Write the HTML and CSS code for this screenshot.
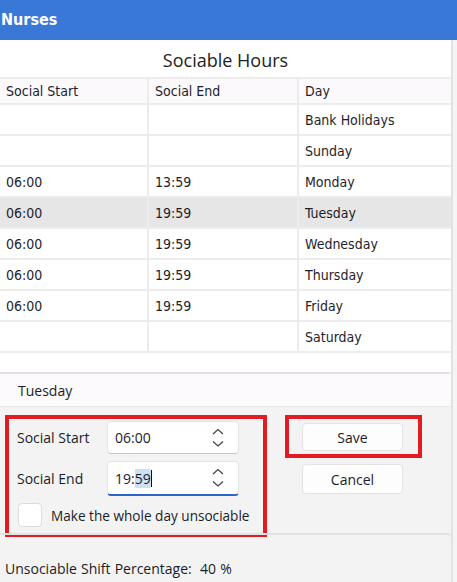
FILE: index.html
```html
<!DOCTYPE html>
<html lang="en">
<head>
    <meta charset="UTF-8">
    <meta name="viewport" content="width=device-width, initial-scale=1.0">
    <title>Nurses</title>
    <link rel="stylesheet" href="styles.css">
</head>
<body>
    <div class="titlebar">Nurses</div>
    <div class="window">
        <div class="content">
            <div class="grid">
                <div class="grid-title">Sociable Hours</div>
                <table class="hours">
                    <thead>
                        <tr><th>Social Start</th><th>Social End</th><th>Day</th></tr>
                    </thead>
                    <tbody>
                        <tr><td></td><td></td><td>Bank Holidays</td></tr>
                        <tr><td></td><td></td><td>Sunday</td></tr>
                        <tr><td>06:00</td><td>13:59</td><td>Monday</td></tr>
                        <tr class="selected"><td>06:00</td><td>19:59</td><td>Tuesday</td></tr>
                        <tr><td>06:00</td><td>19:59</td><td>Wednesday</td></tr>
                        <tr><td>06:00</td><td>19:59</td><td>Thursday</td></tr>
                        <tr><td>06:00</td><td>19:59</td><td>Friday</td></tr>
                        <tr><td></td><td></td><td>Saturday</td></tr>
                    </tbody>
                </table>
            </div>

            <div class="detail">
                <div class="detail-head">Tuesday</div>
                <div class="editor">
                    <div class="fields marked">
                        <div class="field">
                            <label class="field-label">Social Start</label>
                            <div class="time-box">
                                <span class="time-value">06:00</span>
                                <svg class="spin" width="14" height="20" viewBox="0 0 14 20">
                                    <path d="M2 6 L7 1.5 L12 6" />
                                    <path d="M2 13.5 L7 18 L12 13.5" />
                                </svg>
                            </div>
                        </div>
                        <div class="field">
                            <label class="field-label">Social End</label>
                            <div class="time-box focused">
                                <span class="time-value">19:<span class="sel">59</span><span class="caret"></span></span>
                                <svg class="spin" width="14" height="20" viewBox="0 0 14 20">
                                    <path d="M2 6 L7 1.5 L12 6" />
                                    <path d="M2 13.5 L7 18 L12 13.5" />
                                </svg>
                            </div>
                        </div>
                        <div class="check-row">
                            <span class="check"></span>
                            <span>Make the whole day unsociable</span>
                        </div>
                    </div>
                    <div class="actions">
                        <div class="save-wrap marked">
                            <button class="btn">Save</button>
                        </div>
                        <button class="btn cancel">Cancel</button>
                    </div>
                </div>
            </div>

            <div class="summary">Unsociable Shift Percentage:&nbsp; 40 %</div>
        </div>
        <div class="side-strip"></div>
    </div>
</body>
</html>
```

FILE: styles.css
```css
body {
    margin: 0;
    width: 457px;
    height: 582px;
    overflow: hidden;
    background: #f3f3f3;
    font-family: "Open Sans", "Noto Sans", sans-serif;
    color: #1c1c28;
}
.titlebar {
    height: 40px;
    line-height: 40px;
    background: #3a78d7;
    color: #fff;
    font-family: "DejaVu Sans Condensed", "DejaVu Sans", sans-serif;
    font-weight: bold;
    font-size: 16px;
    padding-left: 1px;
}
.window {
    display: flex;
    height: 542px;
}
.content {
    width: 451px;
    display: flex;
    flex-direction: column;
}
.side-strip {
    flex: 1;
    border-left: 2px solid #e2e2e2;
    background: #f5f5f5;
}

/* grid */
.grid {
    background: #fff;
    height: 332px;
    font-family: "DejaVu Sans Condensed", "DejaVu Sans", sans-serif;
    font-size: 14px;
}
.grid-title {
    height: 37px;
    line-height: 40px;
    text-align: center;
    font-family: "Open Sans", "Noto Sans", sans-serif;
    font-size: 18px;
    color: #222;
}
.hours {
    width: 100%;
    border-collapse: collapse;
    table-layout: fixed;
}
.hours th,
.hours td {
    border: 2px solid #ececec;
    text-align: left;
    font-weight: normal;
    padding: 0 0 0 6px;
    color: #1e1e2a;
}
.hours th:first-child,
.hours td:first-child {
    border-left: none;
}
.hours th:last-child,
.hours td:last-child {
    border-right: none;
}
.hours th {
    height: 24px;
    background: #fcf9fc;
}
.hours th:nth-child(1) { width: 141px; }
.hours th:nth-child(2) { width: 142px; }
.hours td {
    height: 29px;
}
.hours .selected td {
    background: #e6e6e6;
}

/* detail panel */
.detail {
    border-top: 2px solid #e0e0e0;
    border-top-right-radius: 4px;
}
.detail-head {
    height: 32px;
    line-height: 34px;
    background: #fdfafd;
    padding-left: 18px;
    font-size: 14px;
    border-bottom: 1px solid #e8e8e8;
}
.editor {
    display: flex;
    height: 126px;
    padding: 12px 0 0 9px;
    box-sizing: border-box;
}
.marked {
    outline: 4px solid #e31b23;
}
.fields {
    width: 254px;
    height: 114px;
    display: flex;
    flex-direction: column;
}
.field {
    display: flex;
    align-items: center;
    margin-left: 8px;
}
.field:first-child {
    margin-top: 2px;
}
.field + .field {
    margin-top: 7px;
}
.field-label {
    width: 90px;
    font-size: 14px;
}
.time-box {
    width: 132px;
    height: 33px;
    box-sizing: border-box;
    background: #fff;
    border: 1px solid #e4e4e4;
    border-bottom-color: #c8c8c8;
    border-radius: 4px;
    display: flex;
    align-items: center;
    justify-content: space-between;
    padding: 0 13px 0 7px;
    font-size: 14px;
}
.time-box.focused {
    height: 35px;
    border-bottom: 2px solid #2d64c8;
}
.sel {
    background: #cde1f5;
}
.caret {
    display: inline-block;
    width: 1px;
    height: 17px;
    background: #111;
    vertical-align: -3px;
}
.spin path {
    fill: none;
    stroke: #444;
    stroke-width: 1.3;
}
.check-row {
    display: flex;
    align-items: center;
    margin: 7px 0 0 9px;
    font-size: 13.6px;
}
.check {
    width: 22px;
    height: 22px;
    background: #fff;
    border: 1px solid #dcdcdc;
    border-radius: 4px;
    margin-right: 9px;
}

.actions {
    margin-left: 26px;
    display: flex;
    flex-direction: column;
}
.save-wrap {
    width: 129px;
    height: 35px;
    padding: 4px 0 0 13px;
    box-sizing: border-box;
}
.btn {
    width: 101px;
    height: 28px;
    background: #fdfdfd;
    border: 1px solid #e3e3e3;
    border-radius: 4px;
    font-family: "Open Sans", "Noto Sans", sans-serif;
    font-size: 14px;
    color: #1c1c28;
    padding: 0;
}
.cancel {
    margin: 10px 0 0 13px;
    height: 30px;
}

.summary {
    border-top: 2px solid #e2e2e2;
    border-top-right-radius: 4px;
    padding: 24px 0 0 5px;
    font-size: 14px;
    word-spacing: 0.5px;
}
```
